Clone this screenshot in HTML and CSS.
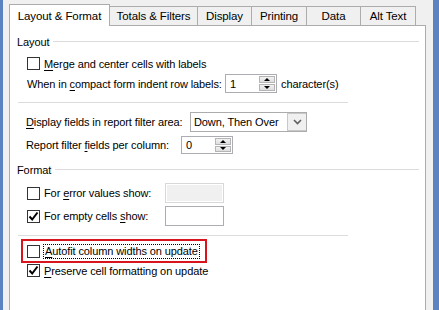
FILE: index.html
```html
<!DOCTYPE html>
<html lang="en">
  <head>
    <meta charset="UTF-8" />
    <meta name="viewport" content="width=device-width, initial-scale=1.0" />
    <title>PivotTable Options</title>
    <link rel="stylesheet" href="styles.css">
  </head>
  <body>
    <div class="window">
      <div class="edge-left"></div>
      <div class="dialog">
        <div class="tabs">
          <div class="tab active">Layout &amp; Format</div>
          <div class="tab w87">Totals &amp; Filters</div>
          <div class="tab w53">Display</div>
          <div class="tab w55">Printing</div>
          <div class="tab w53">Data</div>
          <div class="tab w55">Alt Text</div>
        </div>
        <div class="panel">
          <div class="group-head"><span>Layout</span></div>

          <div class="row check-row">
            <span class="box"></span>
            <span class="label"><u>M</u>erge and center cells with labels</span>
          </div>

          <div class="row field-row compact">
            <span class="lbl-compact">When in <u>c</u>ompact form indent row labels:</span>
            <div class="spin w52">
              <span class="val">1</span>
              <div class="spin-btns">
                <div class="spin-btn"><span class="up"></span></div>
                <div class="spin-btn"><span class="down"></span></div>
              </div>
            </div>
            <span class="after">character(s)</span>
          </div>

          <div class="sep"></div>

          <div class="row field-row display">
            <span class="lbl-display"><u>D</u>isplay fields in report filter area:</span>
            <div class="select">
              <span class="val">Down, Then Over</span>
              <div class="select-btn">
                <svg width="9" height="6" viewBox="0 0 9 6"><path d="M1 1 L4.5 4.5 L8 1" fill="none" stroke="#606060" stroke-width="1.6"/></svg>
              </div>
            </div>
          </div>

          <div class="row field-row report">
            <span class="lbl-report">Report filter <u>f</u>ields per column:</span>
            <div class="spin w52 h18">
              <span class="val">0</span>
              <div class="spin-btns">
                <div class="spin-btn"><span class="up"></span></div>
                <div class="spin-btn"><span class="down"></span></div>
              </div>
            </div>
          </div>

          <div class="group-head format"><span>Format</span></div>

          <div class="row check-row err">
            <span class="box"></span>
            <span class="label w121">For <u>e</u>rror values show:</span>
            <div class="text-box disabled"></div>
          </div>

          <div class="row check-row empty">
            <span class="box">
              <svg width="11" height="11" viewBox="0 0 11 11"><path d="M1.5 5.5 L4.2 8.5 L9.5 1.5" fill="none" stroke="#000" stroke-width="2"/></svg>
            </span>
            <span class="label w121">For empty cells <u>s</u>how:</span>
            <div class="text-box"></div>
          </div>

          <div class="sep"></div>

          <div class="highlight">
            <span class="box"></span>
            <span class="label focus"><u>A</u>utofit column widths on update</span>
          </div>

          <div class="row check-row preserve">
            <span class="box">
              <svg width="11" height="11" viewBox="0 0 11 11"><path d="M1.5 5.5 L4.2 8.5 L9.5 1.5" fill="none" stroke="#000" stroke-width="2"/></svg>
            </span>
            <span class="label"><u>P</u>reserve cell formatting on update</span>
          </div>
        </div>
      </div>
      <div class="edge-right"></div>
    </div>
  </body>
</html>
```
FILE: styles.css
```css
body {
  margin: 0;
  background: #f0f0f0;
  font-family: "Liberation Sans", Arial, sans-serif;
  font-size: 11px;
  letter-spacing: -0.1px;
  color: #000;
  white-space: nowrap;
}
u {
  text-decoration-thickness: 1px;
  text-underline-offset: 2px;
}
.window {
  display: flex;
  height: 310px;
  overflow: hidden;
}
.edge-left {
  width: 3px;
  background: #5b83c1;
  margin-right: 6px;
}
.edge-right {
  width: 6px;
  background: #5b83c1;
  margin-left: 7px;
}
.dialog {
  width: 417px;
  display: flex;
  flex-direction: column;
}
.tabs {
  display: flex;
  height: 25px;
  align-items: flex-end;
  font-size: 11.5px;
}
.tab {
  height: 17px;
  border: 1px solid #acacac;
  border-bottom: none;
  background: #f0f0f0;
  display: flex;
  align-items: center;
  justify-content: center;
  margin-left: -1px;
  padding-bottom: 1px;
}
.tab.active {
  width: 99px;
  height: 21px;
  margin-left: 0;
  margin-bottom: -1px;
  background: #fff;
  position: relative;
  z-index: 1;
  padding-bottom: 0;
}
.w87 { width: 87px; }
.w53 { width: 53px; }
.w55 { width: 54px; }
.panel {
  flex: 1;
  background: #fff;
  border: 1px solid #acacac;
  border-bottom: none;
  padding: 8px 6px 0 7px;
}
.group-head {
  height: 16px;
  display: flex;
  align-items: center;
}
.group-head::after {
  content: "";
  flex: 1;
  border-top: 1px solid #dcdcdc;
  margin-left: 4px;
  margin-top: -1px;
}
.group-head.format {
  margin-top: 8px;
}
.row {
  display: flex;
  align-items: center;
}
.check-row {
  height: 15px;
  margin-top: 6px;
  padding-left: 10px;
}
.box {
  width: 11px;
  height: 11px;
  border: 1px solid #333;
  background: #fff;
  display: flex;
  align-items: center;
  justify-content: center;
  flex: none;
}
.label {
  margin-left: 4px;
}
.w121 {
  width: 121px;
}
.field-row {
  padding-left: 10px;
}
.compact {
  height: 19px;
  margin-top: 3px;
}
.lbl-compact {
  width: 198px;
}
.after {
  margin-left: 4px;
}
.sep {
  height: 1px;
  width: 330px;
  margin: 9px 0 0 1px;
  background: #dcdcdc;
}
.display {
  height: 20px;
  margin-top: 9px;
  padding-left: 9px;
}
.lbl-display {
  width: 164px;
}
.report {
  height: 18px;
  margin-top: 4px;
  padding-left: 9px;
}
.lbl-report {
  width: 155px;
}
.spin {
  border: 1px solid #abadb3;
  background: #fff;
  display: flex;
  align-items: center;
  box-sizing: border-box;
}
.w52 {
  width: 52px;
  height: 19px;
}
.h18 {
  height: 18px;
}
.spin .val {
  flex: 1;
  padding-left: 4px;
}
.spin-btns {
  width: 17px;
  height: 100%;
  display: flex;
  flex-direction: column;
  gap: 1px;
  padding: 1px 1px 1px 0;
  box-sizing: border-box;
}
.spin-btn {
  flex: 1;
  background: linear-gradient(#f2f2f2, #dedede);
  border: 1px solid #b5b5b5;
  display: flex;
  align-items: center;
  justify-content: center;
}
.up {
  width: 0;
  height: 0;
  border-left: 3px solid transparent;
  border-right: 3px solid transparent;
  border-bottom: 3px solid #000;
}
.down {
  width: 0;
  height: 0;
  border-left: 3px solid transparent;
  border-right: 3px solid transparent;
  border-top: 3px solid #000;
}
.select {
  width: 117px;
  height: 20px;
  box-sizing: border-box;
  border: 1px solid #acacac;
  background: #fff;
  display: flex;
  align-items: center;
}
.select .val {
  flex: 1;
  padding-left: 3px;
}
.select-btn {
  width: 19px;
  height: 100%;
  box-sizing: border-box;
  border: 1px solid #c8c8c8;
  border-right: none;
  background: #f0f0f0;
  display: flex;
  align-items: center;
  justify-content: center;
}
.err {
  height: 20px;
  margin-top: 5px;
}
.empty {
  height: 20px;
  margin-top: 3px;
}
.text-box {
  width: 59px;
  height: 20px;
  box-sizing: border-box;
  border: 1px solid #abadb3;
  background: #fff;
}
.text-box.disabled {
  background: #f0f0f0;
  border: 1px solid #d8d8d8;
  box-shadow: inset 0 0 0 1px #fff;
}
.highlight {
  display: flex;
  align-items: center;
  margin: 3px 0 0 4px;
  height: 24px;
  width: 186px;
  box-sizing: border-box;
  border: 2px solid #d9141c;
  padding-left: 4px;
}
.focus {
  outline: 1px dotted #000;
  padding: 0 1px;
  line-height: 13px;
}
.preserve {
  margin-top: 0;
}
```
